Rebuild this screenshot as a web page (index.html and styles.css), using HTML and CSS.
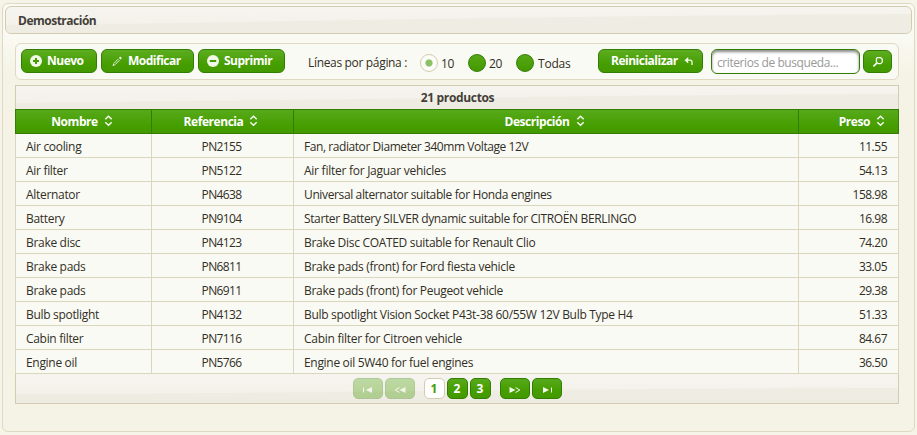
FILE: index.html
```
<!DOCTYPE html>
<html lang="es">
<head>
<meta charset="utf-8">
<title>Demostración</title>
<link rel="stylesheet" href="styles.css">
</head>
<body>
<svg class="defs" width="0" height="0"><defs>
<symbol id="sort" viewBox="0 0 9 12"><path d="M1.3 4.2 4.5 1.2 7.7 4.2M1.3 7.3l3.2 3 3.2-3"/></symbol>
</defs></svg>
<main class="panel">
<header class="bar"><svg class="wave" viewBox="0 0 905 26" preserveAspectRatio="none"><path d="M0 18C250 16 480 9 905 7V26H0z"/></svg><h1>Demostración</h1></header>
<section class="toolbar">
<button class="btn new"><svg viewBox="0 0 12 12"><circle cx="6" cy="6" r="6"/><path class="cut" d="M6 3v6M3 6h6"/></svg><span>Nuevo</span></button>
<button class="btn edit"><svg viewBox="0 0 12 12"><path d="M1.5 11 2.3 8.4 4.1 10.2z"/><path class="line fine" d="M2.8 8.5 7.3 4M4 9.7 8.5 5.2"/><path d="M7.9 3 9.3 1.6 10.9 3.2 9.5 4.6z"/></svg><span>Modificar</span></button>
<button class="btn del"><svg viewBox="0 0 12 12"><circle cx="6" cy="6" r="6"/><path class="cut" d="M2.8 6h6.4"/></svg><span>Suprimir</span></button>
<span class="label">Líneas por página :</span>
<span class="radio on"></span><span class="opt ten">10</span>
<span class="radio"></span><span class="opt twenty">20</span>
<span class="radio"></span><span class="opt all">Todas</span>
<button class="btn reset"><span>Reinicializar</span><svg viewBox="0 0 12 12"><path d="M1.5 5.2 5.2 2v6.4z"/><path class="line" d="M4.5 5.2h2.7q1.8 0 1.8 2V10"/></svg></button>
<input class="search" type="text" placeholder="criterios de busqueda...">
<button class="btn find"><svg viewBox="0 0 12 12"><path class="line" d="M5.2 1.7h3.5l1.6 1.6v2.8L8.7 7.7H6.2L4.4 6V2.8z"/><path class="line thick" d="M4.8 7.2 1.4 10.4"/></svg></button>
</section>
<section class="grid">
<div class="caption"><svg class="wave" viewBox="0 0 882 23" preserveAspectRatio="none"><path d="M0 17C250 15 480 10 882 8V23H0z"/></svg><span>21 productos</span></div>
<table>
<colgroup><col class="c1"><col class="c2"><col class="c3"><col class="c4"></colgroup>
<thead><tr><th><span>Nombre</span><svg><use href="#sort"/></svg></th><th><span>Referencia</span><svg><use href="#sort"/></svg></th><th><span>Descripción</span><svg><use href="#sort"/></svg></th><th class="num"><span>Preso</span><svg><use href="#sort"/></svg></th></tr></thead>
<tbody>
<tr><td>Air cooling</td><td>PN2155</td><td class="tight">Fan, radiator Diameter 340mm Voltage 12V</td><td>11.55</td></tr>
<tr><td>Air filter</td><td>PN5122</td><td class="loose">Air filter for Jaguar vehicles</td><td>54.13</td></tr>
<tr><td>Alternator</td><td>PN4638</td><td class="snug">Universal alternator suitable for Honda engines</td><td>158.98</td></tr>
<tr><td>Battery</td><td>PN9104</td><td class="snug">Starter Battery SILVER dynamic suitable for CITROËN BERLINGO</td><td>16.98</td></tr>
<tr><td>Brake disc</td><td>PN4123</td><td>Brake Disc COATED suitable for Renault Clio</td><td>74.20</td></tr>
<tr><td>Brake pads</td><td>PN6811</td><td>Brake pads (front) for Ford fiesta vehicle</td><td>33.05</td></tr>
<tr><td>Brake pads</td><td>PN6911</td><td>Brake pads (front) for Peugeot vehicle</td><td>29.38</td></tr>
<tr><td>Bulb spotlight</td><td>PN4132</td><td>Bulb spotlight Vision Socket P43t-38 60/55W 12V Bulb Type H4</td><td>51.33</td></tr>
<tr><td>Cabin filter</td><td>PN7116</td><td class="loose">Cabin filter for Citroen vehicle</td><td>84.67</td></tr>
<tr><td>Engine oil</td><td>PN5766</td><td>Engine oil 5W40 for fuel engines</td><td>36.50</td></tr>
</tbody>
</table>
<nav class="pager"><svg class="wave" viewBox="0 0 882 29" preserveAspectRatio="none"><path d="M0 20C250 20 480 15 882 14V29H0z"/></svg>
<button class="pg off"><svg viewBox="0 0 12 8"><path d="M10 1v6L4 4z"/><path class="line" d="M1.5 1.5v5"/></svg></button>
<button class="pg off"><svg viewBox="0 0 12 8"><path d="M11.5 1v6L5.5 4z"/><path class="line" d="M5.5 1.5 1.2 4l4.3 2.5"/></svg></button>
<button class="pg n current">1</button><button class="pg n">2</button><button class="pg n">3</button>
<button class="pg next"><svg viewBox="0 0 12 8"><path d="M.5 1v6l6-3z"/><path class="line" d="M6.5 1.5 10.8 4 6.5 6.5"/></svg></button>
<button class="pg"><svg viewBox="0 0 12 8"><path d="M2 1v6l6-3z"/><path class="line" d="M10.5 1.5v5"/></svg></button>
</nav>
</section>
</main>
</body>
</html>
```
FILE: styles.css
```
* { box-sizing: border-box; }
html { background: #f6f4e8; }
body {
  margin: 0; padding: 3px 2px;
  font: 12px/16px "Open Sans", "Noto Sans", sans-serif;
  color: #312e25;
}
button, input { font: inherit; margin: 0; padding: 0; }
.defs { position: absolute; }
.panel {
  height: 429px; padding: 2px;
  border: 1px solid #dfd9c3; border-radius: 6px;
  background: linear-gradient(#fafaf4 0, #fafaf4 32px, #f5f3e5 70px);
}
.bar, .caption, .pager { position: relative; background: linear-gradient(#f6f4ef, #f3f0e9); }
.wave { position: absolute; inset: 0; width: 100%; height: 100%; fill: #edeae0; opacity: .7; }
.bar { height: 28px; border: 1px solid #d4ccb0; border-radius: 6px; overflow: hidden; }
h1 {
  position: relative; margin: 0; padding: 6px 12px;
  font-size: 12px; line-height: 16px; font-weight: 700; color: #433f38; letter-spacing: -.5px;
}
.toolbar {
  display: flex; align-items: flex-start; height: 37px; margin: 9px 13px 5px 10px; padding: 5px;
  border: 1px solid #dfd9c3; border-radius: 6px; background: #fafaf4;
}
.btn {
  display: flex; align-items: center; flex: none; height: 24px; margin-right: 4px; padding-left: 8px;
  border: 1px solid #327e04; border-radius: 6px;
  background: linear-gradient(#5dad20 0, #4fa30e 40%, #459e00 65%, #439900);
  color: #fff; font-weight: 700; line-height: 20px; letter-spacing: -.4px;
}
.btn svg { flex: none; width: 12px; height: 12px; fill: #f0f8e8; }
.btn span { margin-left: 5px; white-space: nowrap; }
.cut { fill: none; stroke: #459e00; stroke-width: 2; }
.line { fill: none; stroke: #f4faee; stroke-width: 1.3; }
.fine { stroke-width: .9; }
.thick { stroke-width: 1.8; }
.new { width: 76px; }
.edit { width: 93px; }
.edit svg { margin-left: 1px; }
.edit span, .reset span, .del span, .new span { letter-spacing: -.5px; }
.del { width: 87px; }
.label { width: 112px; margin: 6px 0 0 19px; white-space: nowrap; letter-spacing: -.33px; }
.radio {
  flex: none; width: 18px; height: 18px; margin-top: 5px; border: 1px solid #327e04; border-radius: 50%;
  background: linear-gradient(#57a816, #439900);
}
.on { border-color: #d4ccb0; background: radial-gradient(circle, #8cc167 3.2px, #fcfcf9 4px); }
.opt { margin: 7px 0 0 3px; letter-spacing: -.4px; }
.ten { width: 27px; }
.twenty { width: 27px; }
.all { width: 52px; margin-left: 4px; letter-spacing: -.2px; }
.reset { width: 105px; padding-left: 7px; margin: 0 8px 0 auto; }
.reset span { margin-right: 5px; }
.search {
  flex: none; width: 149px; height: 25px; margin-right: 3px; padding: 1px 5px 0;
  border: 1px solid #327e04; border-radius: 6px; background: #fff;
  box-shadow: inset 0 2px 3px #888; letter-spacing: -.42px;
}
.search::placeholder { color: #999; opacity: 1; }
.find { width: 29px; margin: 1px 1px 0 0; height: 23px; }
.grid { margin: 0 13px 0 10px; }
.caption {
  height: 24px; padding-left: 1px; border: 1px solid #d4ccb0; border-bottom: 0;
  text-align: center; font-weight: 700; line-height: 24px; color: #433f38; letter-spacing: -.35px;
}
.caption span { position: relative; }
table { width: 884px; border-collapse: separate; border-spacing: 0; table-layout: fixed; }
.c1 { width: 136px; }
.c2 { width: 142px; }
.c3 { width: 505px; }
.c4 { width: 101px; }
th {
  height: 25px; padding: 0 3px 0 0; border: 1px solid #327e04; border-right: 0;
  background: linear-gradient(#57a91a, #459e00 70%, #439900);
  color: #fff; font-weight: 700; white-space: nowrap; letter-spacing: -.45px;
}
th:last-child { border-right: 1px solid #327e04; }
th svg { width: 9px; height: 12px; margin: 0 0 0 6px; vertical-align: -1px; fill: none; stroke: #f4faee; stroke-width: 1.5; }
th.num { padding-right: 13px; text-align: right; }
td {
  height: 24px; padding: 2px 10px 0; border: solid #dcd6bf; border-width: 0 0 1px 1px;
  background: #fafaf4; white-space: nowrap; letter-spacing: -.31px;
}
td:nth-child(2) { padding-right: 12px; text-align: center; letter-spacing: -.65px; }
td:last-child { padding-right: 11px; text-align: right; border-right-width: 1px; letter-spacing: -.5px; }
td.tight { letter-spacing: -.43px; }
td.snug { letter-spacing: -.37px; }
td.loose { letter-spacing: -.26px; }
.pager {
  display: flex; justify-content: center; height: 30px; padding: 4px 0 0 2px;
  border: 1px solid #d4ccb0; border-top: 0;
}
.pg {
  position: relative; display: flex; align-items: center; justify-content: center;
  width: 30px; height: 21px; margin-right: 2px; border: 1px solid #327e04; border-radius: 5px;
  background: linear-gradient(#57a91a, #459e00 60%, #439900); color: #fff; font-weight: 700;
}
.pg svg { width: 12px; height: 8px; fill: #f4faee; margin-top: 3px; }
.pg .line { stroke-width: 1; }
.off { opacity: .35; }
.n { width: 21px; }
.current { margin-left: 7px; border-color: #d4ccb0; background: #fff; color: #459e00; }
.next { margin-left: 7px; }
```
